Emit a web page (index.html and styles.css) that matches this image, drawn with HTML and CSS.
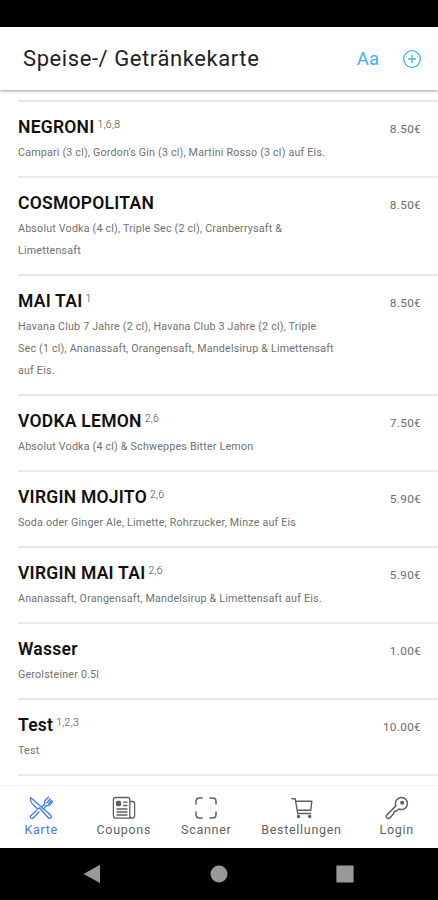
FILE: index.html
```
<!DOCTYPE html>
<html lang="de">
<head>
    <meta charset="UTF-8">
    <meta name="viewport" content="width=device-width, initial-scale=1.0">
    <title>Speise-/ Getränkekarte</title>
    <link rel="stylesheet" href="styles.css">
</head>
<body>
    <div class="status-bar"></div>
    <header class="header">
        <h1>Speise-/ Getränkekarte</h1>
        <button class="font-btn">Aa</button>
        <button class="add-btn">
            <svg width="20" height="20" viewBox="0 0 20 20" fill="none" stroke="currentColor" stroke-width="1.3">
                <circle cx="10" cy="10" r="8.3"/>
                <path d="M10 6v8M6 10h8"/>
            </svg>
        </button>
    </header>

    <main class="menu">
        <div class="item">
            <div class="item-text">
                <h2>NEGRONI<span class="note">1,6,8</span></h2>
                <p>Campari (3 cl), Gordon's Gin (3 cl), Martini Rosso (3 cl) auf Eis.</p>
            </div>
            <div class="price">8.50€</div>
        </div>
        <div class="item">
            <div class="item-text">
                <h2>COSMOPOLITAN</h2>
                <p>Absolut Vodka (4 cl), Triple Sec (2 cl), Cranberrysaft &amp; Limettensaft</p>
            </div>
            <div class="price">8.50€</div>
        </div>
        <div class="item">
            <div class="item-text">
                <h2>MAI TAI<span class="note">1</span></h2>
                <p>Havana Club 7 Jahre (2 cl), Havana Club 3 Jahre (2 cl), Triple Sec&nbsp;(1&nbsp;cl), Ananassaft, Orangensaft, Mandelsirup &amp; Limettensaft auf&nbsp;Eis.</p>
            </div>
            <div class="price">8.50€</div>
        </div>
        <div class="item">
            <div class="item-text">
                <h2>VODKA LEMON<span class="note">2,6</span></h2>
                <p>Absolut Vodka (4 cl) &amp; Schweppes Bitter Lemon</p>
            </div>
            <div class="price">7.50€</div>
        </div>
        <div class="item">
            <div class="item-text">
                <h2>VIRGIN MOJITO<span class="note">2,6</span></h2>
                <p>Soda oder Ginger Ale, Limette, Rohrzucker, Minze auf Eis</p>
            </div>
            <div class="price">5.90€</div>
        </div>
        <div class="item">
            <div class="item-text">
                <h2>VIRGIN MAI TAI<span class="note">2,6</span></h2>
                <p>Ananassaft, Orangensaft, Mandelsirup &amp; Limettensaft auf Eis.</p>
            </div>
            <div class="price">5.90€</div>
        </div>
        <div class="item">
            <div class="item-text">
                <h2>Wasser</h2>
                <p>Gerolsteiner 0.5l</p>
            </div>
            <div class="price">1.00€</div>
        </div>
        <div class="item">
            <div class="item-text">
                <h2>Test<span class="note">1,2,3</span></h2>
                <p>Test</p>
            </div>
            <div class="price">10.00€</div>
        </div>
        <div class="item item-end"></div>
    </main>

    <nav class="tabs">
        <a class="tab tab-karte active">
            <svg width="24" height="24" viewBox="0 0 24 24" fill="none" stroke="currentColor" stroke-width="1.3" stroke-linejoin="round" stroke-linecap="round">
                <path d="M1.500 1.500C1 4 2 6.500 4 8.500L8.500 13 10.500 12 19 21.500C20 22.700 21.300 22.700 22 21.800 22.700 21 22.500 20 21.500 19Z"/>
                <path d="M10 16 4.500 21.700C3.500 22.700 2.300 22.500 1.700 21.800 1.200 21 1.300 20 2.200 19.200L7.500 14.500M13 10.500 16 7.700C15.200 6 15.700 4.700 16.800 3.700L19.500 1.200M15.200 12.200 17.300 9.500C19 10 20.300 9.500 21.300 8.500L23.500 5.500M17.800 6.700 21.200 3M19.500 7.700 22.500 4.500"/>
            </svg>
            <span>Karte</span>
        </a>
        <a class="tab tab-coupons">
            <svg width="24" height="24" viewBox="0 0 24 24" fill="none" stroke="currentColor" stroke-width="1.3" stroke-linecap="round">
                <path d="M17.800 19.500V3.300C17.800 2.200 17 1.500 16 1.500H3.200C2.100 1.500 1.400 2.200 1.400 3.300V19.500C1.400 21.200 2.400 22.200 4 22.200H20.200C18.700 22.200 17.800 21.200 17.800 19.500ZM17.800 5.500H20.500C21.800 5.500 22.600 6.300 22.600 7.500V19.800C22.600 21.300 21.700 22.200 20.200 22.200"/>
                <path d="M11.500 6.200H15M11.500 9.500H15M5 13H15M5 16H15M5 19H15"/>
                <rect class="filled" x="4.500" y="5.500" width="4" height="4" rx="1"/>
            </svg>
            <span>Coupons</span>
        </a>
        <a class="tab tab-scanner">
            <svg width="24" height="24" viewBox="0 0 24 24" fill="none" stroke="currentColor" stroke-width="1.500" stroke-linecap="round">
                <path d="M16 2H18.500C20.700 2 22 3.300 22 5.500V8M22 16V18.500C22 20.700 20.700 22 18.500 22H16M8 22H5.500C3.300 22 2 20.700 2 18.500V16M2 8V5.500C2 3.300 3.300 2 5.500 2H8"/>
            </svg>
            <span>Scanner</span>
        </a>
        <a class="tab tab-orders">
            <svg width="24" height="24" viewBox="0 0 24 24" fill="none" stroke="currentColor" stroke-width="1.400" stroke-linecap="round" stroke-linejoin="round">
                <path d="M2 2.700H5.200L7.700 17.500H20.500M5.800 5.300H21.800L20.800 14.200H7.200"/>
                <circle class="filled" cx="8.500" cy="20.500" r="1"/>
                <circle class="filled" cx="19.700" cy="20.500" r="1"/>
            </svg>
            <span>Bestellungen</span>
        </a>
        <a class="tab tab-login">
            <svg width="24" height="24" viewBox="0 0 24 24" fill="none" stroke="currentColor" stroke-width="1.500" stroke-linejoin="round">
                <path d="M20.700 3.300C18.400 1 14.500 1 12.200 3.300 10.400 5.100 10 7.600 10.900 9.900L1.800 19C1 20 1.200 21 1.800 21.700 2.700 22.600 4 22.600 4.800 21.900L8.300 18 9.200 15.800 11.300 15 14 13C16.300 14 18.900 13.500 20.700 11.700 23 9.400 23 5.600 20.700 3.300Z"/>
                <circle class="filled" cx="17.200" cy="6.800" r="1.300"/>
            </svg>
            <span>Login</span>
        </a>
    </nav>

    <div class="system-nav">
        <svg width="18" height="20" viewBox="0 0 18 20"><path d="M17 .8V19L.5 10Z"/></svg>
        <svg width="18" height="18" viewBox="0 0 18 18"><circle cx="9" cy="9" r="8.500"/></svg>
        <svg width="18" height="18" viewBox="0 0 18 18"><rect x=".4" y=".4" width="17.200" height="17.200" rx="1"/></svg>
    </div>
</body>
</html>
```
FILE: styles.css
```
* {
    box-sizing: border-box;
}
body {
    margin: 0;
    height: 900px;
    display: flex;
    flex-direction: column;
    overflow: hidden;
    background-color: #fff;
    color: #111;
    font-family: Roboto, sans-serif;
}
h1, h2, p {
    margin: 0;
}
svg {
    display: block;
}
button {
    border: none;
    padding: 0;
    background: none;
    font-family: inherit;
    color: #39b5f5;
    cursor: pointer;
}
.status-bar {
    height: 27px;
    flex: none;
    background-color: #000;
}
.header {
    height: 63px;
    flex: none;
    display: flex;
    align-items: center;
    padding: 0 16px 0 23px;
    box-shadow: 0 1px 3px rgba(0, 0, 0, 0.4);
}
.header h1 {
    flex: 1;
    font-size: 22px;
    font-weight: 400;
    letter-spacing: 0.58px;
    color: #222;
}
.font-btn {
    font-size: 18.5px;
    font-weight: 400;
    margin-right: 23px;
}
.menu {
    flex: 1;
    padding: 10px 0 0 18px;
}
.item {
    display: flex;
    justify-content: space-between;
    border-top: 2px solid #e9e9e9;
    padding: 14px 17px 12px 0;
}
.item-end {
    padding: 0;
}
.item-text {
    width: 320px;
}
.item h2 {
    display: flex;
    font-size: 17.5px;
    font-weight: 600;
    line-height: 22px;
    letter-spacing: 0.25px;
    margin-bottom: 4px;
}
.note {
    margin-left: 3px;
    font-size: 10.5px;
    font-weight: 300;
    line-height: 17px;
    color: #444;
}
.item p {
    font-size: 10.7px;
    line-height: 22px;
    letter-spacing: 0.2px;
    color: #717171;
}
.price {
    font-size: 11.8px;
    line-height: 26px;
    letter-spacing: 0.3px;
    color: #6c6c6c;
}
.tabs {
    height: 63px;
    flex: none;
    display: flex;
    border-top: 1px solid #f0f0f0;
    color: #5f5f5f;
}
.tab {
    display: flex;
    flex-direction: column;
    align-items: center;
    padding-top: 10px;
    font-size: 12.5px;
    line-height: 18px;
    letter-spacing: 0.7px;
}
.tab span {
    margin-top: 1px;
}
.tab-karte, .tab-coupons, .tab-scanner {
    width: 82.5px;
}
.tab-orders {
    width: 108px;
}
.tab-login {
    width: 82.5px;
}
.active {
    color: #4479ef;
}
.filled {
    fill: currentColor;
}
.system-nav {
    height: 52px;
    flex: none;
    display: flex;
    align-items: center;
    justify-content: space-between;
    padding: 0 84px 0 83px;
    background-color: #000;
    fill: #999;
}
```
